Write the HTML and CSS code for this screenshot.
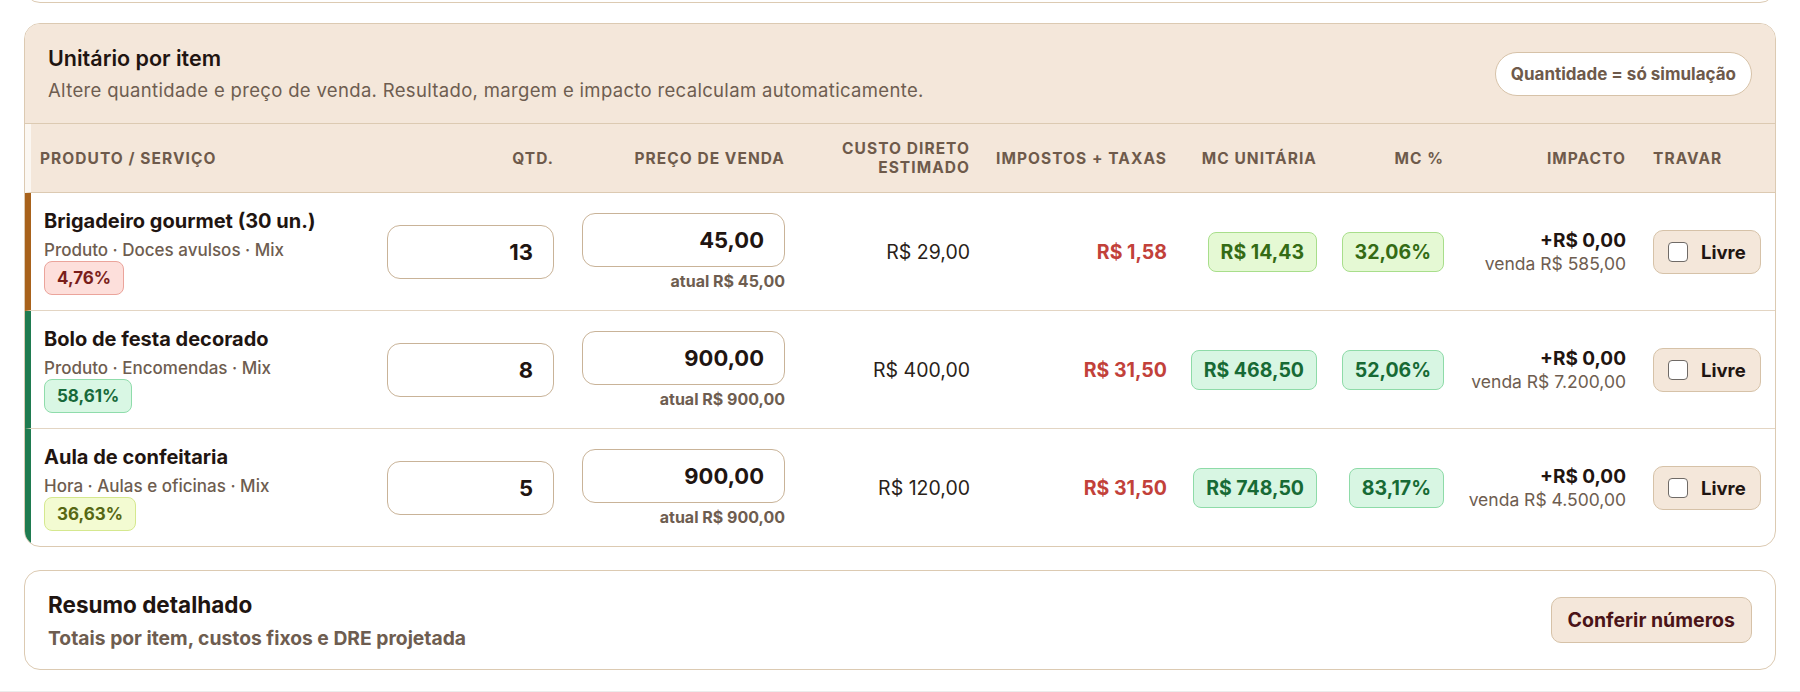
FILE: index.html
```html
<!DOCTYPE html>
<html lang="pt-BR">
<head>
<meta charset="utf-8">
<title>Unitário por item</title>
<link rel="stylesheet" href="styles.css">
</head>
<body>
<div class="page">
  <div class="prev-card"></div>

  <section class="card">
    <header class="card-head">
      <div>
        <h2 class="title">Unitário por item</h2>
        <p class="subtitle">Altere quantidade e preço de venda. Resultado, margem e impacto recalculam automaticamente.</p>
      </div>
      <span class="pill">Quantidade = só simulação</span>
    </header>

    <div class="grid thead">
      <div class="th">Produto / Serviço</div>
      <div class="th num">Qtd.</div>
      <div class="th num">Preço de venda</div>
      <div class="th num">Custo direto<br>estimado</div>
      <div class="th num">Impostos + taxas</div>
      <div class="th num">MC unitária</div>
      <div class="th num">MC %</div>
      <div class="th num">Impacto</div>
      <div class="th">Travar</div>
    </div>

    <div class="grid row bar-warn">
      <div class="td product">
        <div class="p-name">Brigadeiro gourmet (30 un.)</div>
        <div class="p-meta">Produto · Doces avulsos · Mix</div>
        <span class="tag tag-red">4,76%</span>
      </div>
      <div class="td"><input class="field qty" type="text" value="13"></div>
      <div class="td">
        <input class="field price" type="text" value="45,00">
        <div class="hint">atual R$ 45,00</div>
      </div>
      <div class="td num money">R$ 29,00</div>
      <div class="td num tax">R$ 1,58</div>
      <div class="td num"><span class="chip chip-lime">R$ 14,43</span></div>
      <div class="td num"><span class="chip chip-lime">32,06%</span></div>
      <div class="td num">
        <div class="imp">+R$ 0,00</div>
        <div class="imp-sub">venda R$ 585,00</div>
      </div>
      <div class="td"><button class="lock" type="button"><span class="box"></span>Livre</button></div>
    </div>

    <div class="grid row bar-ok">
      <div class="td product">
        <div class="p-name">Bolo de festa decorado</div>
        <div class="p-meta">Produto · Encomendas · Mix</div>
        <span class="tag tag-green">58,61%</span>
      </div>
      <div class="td"><input class="field qty" type="text" value="8"></div>
      <div class="td">
        <input class="field price" type="text" value="900,00">
        <div class="hint">atual R$ 900,00</div>
      </div>
      <div class="td num money">R$ 400,00</div>
      <div class="td num tax">R$ 31,50</div>
      <div class="td num"><span class="chip chip-green">R$ 468,50</span></div>
      <div class="td num"><span class="chip chip-green">52,06%</span></div>
      <div class="td num">
        <div class="imp">+R$ 0,00</div>
        <div class="imp-sub">venda R$ 7.200,00</div>
      </div>
      <div class="td"><button class="lock" type="button"><span class="box"></span>Livre</button></div>
    </div>

    <div class="grid row bar-ok last">
      <div class="td product">
        <div class="p-name">Aula de confeitaria</div>
        <div class="p-meta">Hora · Aulas e oficinas · Mix</div>
        <span class="tag tag-lime">36,63%</span>
      </div>
      <div class="td"><input class="field qty" type="text" value="5"></div>
      <div class="td">
        <input class="field price" type="text" value="900,00">
        <div class="hint">atual R$ 900,00</div>
      </div>
      <div class="td num money">R$ 120,00</div>
      <div class="td num tax">R$ 31,50</div>
      <div class="td num"><span class="chip chip-green">R$ 748,50</span></div>
      <div class="td num"><span class="chip chip-green">83,17%</span></div>
      <div class="td num">
        <div class="imp">+R$ 0,00</div>
        <div class="imp-sub">venda R$ 4.500,00</div>
      </div>
      <div class="td"><button class="lock" type="button"><span class="box"></span>Livre</button></div>
    </div>
  </section>

  <section class="summary">
    <div>
      <h2 class="sum-title">Resumo detalhado</h2>
      <p class="sum-sub">Totais por item, custos fixos e DRE projetada</p>
    </div>
    <button class="btn" type="button">Conferir números</button>
  </section>
</div>
<div class="bottom-line"></div>
</body>
</html>
```

FILE: styles.css
```css
* { box-sizing: border-box; }

html, body {
  margin: 0;
  background: #ffffff;
  overflow: hidden;
}

body {
  font-family: Inter, "Noto Sans", "Liberation Sans", sans-serif;
  color: #1f1511;
}

.page {
  padding: 0 24px;
}

.prev-card {
  height: 40px;
  margin-top: -37px;
  border: 1px solid #dccab2;
  border-radius: 16px;
  background: #ffffff;
}

.card {
  margin-top: 20px;
  border: 1px solid #dccab2;
  border-radius: 16px;
  overflow: hidden;
  background: #ffffff;
}

.card-head {
  display: flex;
  align-items: center;
  justify-content: space-between;
  height: 100px;
  padding: 0 23px;
  background: #f4e7da;
  border-bottom: 1px solid #dccab2;
}

.title {
  margin: 0 0 5px;
  font-size: 21.5px;
  line-height: 28px;
  font-weight: 600;
  color: #1f1511;
}

.subtitle {
  margin: 0;
  font-size: 18.5px;
  line-height: 26px;
  font-weight: 400;
  letter-spacing: 0.33px;
  color: #6e5d50;
}

.pill {
  display: inline-flex;
  align-items: center;
  height: 44px;
  padding: 0 15px;
  background: #ffffff;
  border: 1px solid #d6c2a8;
  border-radius: 999px;
  font-size: 17px;
  font-weight: 700;
  color: #6e5a4b;
  white-space: nowrap;
}

.grid {
  display: grid;
  grid-template-columns: 342px 195px 231px 185px 197px 150px 127px 182px 135px;
  align-items: center;
}

.thead {
  height: 69px;
  background: #f4e7da;
  border-left: 6px solid #fbf7f2;
  border-bottom: 1px solid #dccab2;
}

.th {
  padding: 0 14px;
  font-size: 15.5px;
  line-height: 19px;
  font-weight: 700;
  letter-spacing: 1.05px;
  text-transform: uppercase;
  color: #6e5a4b;
  white-space: nowrap;
}

.th:first-child {
  padding-left: 9px;
}

.th.num {
  padding-left: 0;
}

.th:last-child {
  padding-left: 13px;
}

.num {
  text-align: right;
}

.row {
  height: 118px;
  border-bottom: 1px solid #e3d5c3;
}

.row.last {
  height: 117px;
  border-bottom: 0;
}

.bar-warn { border-left: 6px solid #a8621b; }
.bar-ok { border-left: 6px solid #1f7b50; }

.td {
  padding: 0 14px;
}

.td.num {
  padding-left: 0;
  white-space: nowrap;
}

.td:last-child {
  padding-left: 13px;
}

.product {
  padding-left: 13px;
}

.p-name {
  font-size: 20px;
  line-height: 24px;
  font-weight: 700;
  color: #1f1511;
  margin-bottom: 7px;
}

.p-meta {
  font-size: 17px;
  line-height: 20px;
  font-weight: 500;
  color: #6e5d50;
  margin-bottom: 1px;
}

.tag {
  display: inline-block;
  padding: 6px 12px;
  border: 1px solid;
  border-radius: 8px;
  font-size: 17px;
  line-height: 20px;
  font-weight: 700;
}

.tag-red { background: #fddfdb; border-color: #eba49b; color: #7a1e1a; }
.tag-green { background: #d9f7e4; border-color: #8fdcab; color: #17693a; }
.tag-lime { background: #f3fbd2; border-color: #d5e88f; color: #566713; }

.field {
  display: block;
  width: 100%;
  height: 54px;
  padding: 0 20px;
  border: 1.5px solid #c9b398;
  border-radius: 13px;
  background: #ffffff;
  font-family: Inter, "Noto Sans", "Liberation Sans", sans-serif;
  font-size: 22px;
  font-weight: 700;
  color: #1f1511;
  text-align: right;
  outline: none;
}

.hint {
  margin-top: 5px;
  text-align: right;
  font-size: 16px;
  line-height: 18px;
  font-weight: 700;
  color: #6e5d50;
  white-space: nowrap;
}

.money {
  font-size: 19.5px;
  font-weight: 400;
  color: #2a1f1a;
}

.tax {
  font-size: 19.5px;
  font-weight: 700;
  color: #c2413a;
}

.chip {
  display: inline-block;
  padding: 8px 12px;
  border: 1px solid;
  border-radius: 8px;
  font-size: 19.5px;
  line-height: 22px;
  font-weight: 700;
  white-space: nowrap;
}

.chip-lime { background: #e5f9d4; border-color: #a8de8b; color: #346b15; }
.chip-green { background: #d8f6e3; border-color: #8edba8; color: #176a35; }

.imp {
  font-size: 19px;
  line-height: 22px;
  font-weight: 700;
  color: #1f1511;
}

.imp-sub {
  margin-top: 2px;
  font-size: 17.5px;
  line-height: 20px;
  font-weight: 400;
  color: #6e5d50;
}

.lock {
  display: inline-flex;
  align-items: center;
  gap: 13px;
  height: 44px;
  padding: 0 14px;
  background: #f4e7da;
  border: 1px solid #d6c2a8;
  border-radius: 10px;
  font-family: Inter, "Noto Sans", "Liberation Sans", sans-serif;
  font-size: 18.5px;
  font-weight: 700;
  color: #1f1511;
  cursor: pointer;
}

.box {
  display: block;
  width: 20px;
  height: 20px;
  background: #ffffff;
  border: 1.5px solid #6f6a66;
  border-radius: 4px;
}

.summary {
  display: flex;
  align-items: center;
  justify-content: space-between;
  margin-top: 23px;
  height: 100px;
  padding: 0 23px;
  border: 1px solid #dccab2;
  border-radius: 16px;
  background: #ffffff;
}

.sum-title {
  margin: 0 0 7px;
  font-size: 22.5px;
  line-height: 28px;
  font-weight: 700;
  color: #1f1511;
}

.sum-sub {
  margin: 0;
  font-size: 19.3px;
  line-height: 24px;
  font-weight: 700;
  color: #6e5d50;
}

.btn {
  height: 46px;
  padding: 0 16px;
  background: #f4e7da;
  border: 1px solid #d6c2a8;
  border-radius: 10px;
  font-family: Inter, "Noto Sans", "Liberation Sans", sans-serif;
  font-size: 19.5px;
  font-weight: 700;
  color: #4a1418;
  cursor: pointer;
}

.bottom-line {
  margin-top: 21px;
  border-top: 1px solid #ececec;
}
```
